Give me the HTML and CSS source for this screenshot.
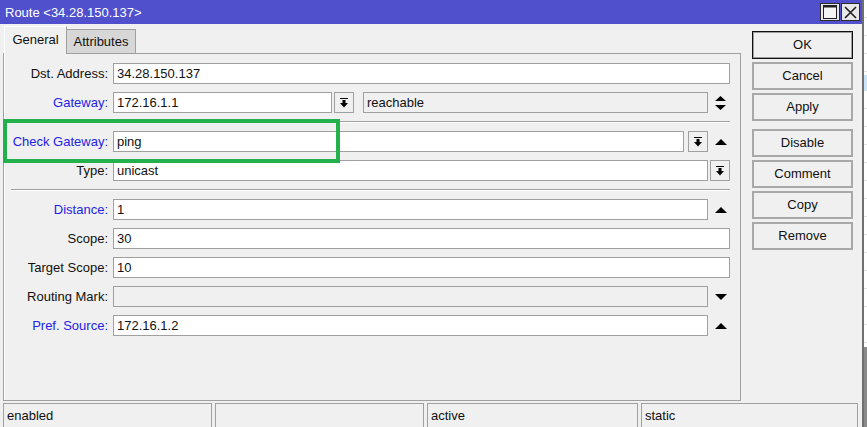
FILE: index.html
```html
<!DOCTYPE html>
<html>
<head>
<meta charset="utf-8">
<link rel="stylesheet" href="styles.css">
</head>
<body>
<div class="desktop">
  <div class="window">
    <div class="titlebar">
      <span class="title">Route &lt;34.28.150.137&gt;</span>
      <div class="tb-btns">
        <span class="tb-btn tb-max"><svg width="14" height="14" viewBox="0 0 14 14"><rect x="0.5" y="0.5" width="13" height="13" fill="#f4f4f4" stroke="#1e1e1e" stroke-width="1"/><rect x="1" y="1" width="12" height="1.5" fill="#1e1e1e"/></svg></span>
        <span class="tb-btn tb-close"><svg width="13" height="13" viewBox="0 0 13 13"><path d="M1 1 L12 12 M12 1 L1 12" stroke="#1e1e1e" stroke-width="1.6" fill="none"/></svg></span>
      </div>
    </div>
    <div class="main">
      <div class="left">
        <div class="tabs">
          <div class="tab tab-active">General</div>
          <div class="tab tab-inactive">Attributes</div>
        </div>
        <div class="panel">
          <div class="row">
            <div class="label">Dst. Address:</div>
            <div class="field span2"><div class="input">34.28.150.137</div></div>
          </div>
          <div class="row">
            <div class="label blue">Gateway:</div>
            <div class="field">
              <div class="input w-gw">172.16.1.1</div>
              <div class="ddbtn ml2"><svg width="8" height="10" viewBox="0 0 8 10"><rect x="0" y="0" width="8" height="1"/><rect x="2.5" y="2" width="3" height="3"/><path d="M0 5 L8 5 L4 9.5 Z"/></svg></div>
              <div class="input ro grow ml9">reachable</div>
            </div>
            <div class="slot"><svg width="11" height="14" viewBox="0 0 11 14"><path d="M0 5 L5.5 0 L11 5 Z M0 9 L11 9 L5.5 14 Z"/></svg></div>
          </div>
          <div class="sep"></div>
          <div class="row">
            <div class="label blue">Check Gateway:</div>
            <div class="field">
              <div class="input grow">ping</div>
              <div class="ddbtn ml4"><svg width="8" height="10" viewBox="0 0 8 10"><rect x="0" y="0" width="8" height="1"/><rect x="2.5" y="2" width="3" height="3"/><path d="M0 5 L8 5 L4 9.5 Z"/></svg></div>
            </div>
            <div class="slot"><svg width="12" height="6" viewBox="0 0 12 6"><path d="M0 6 L6 0 L12 6 Z"/></svg></div>
          </div>
          <div class="row">
            <div class="label">Type:</div>
            <div class="field"><div class="input grow">unicast</div></div>
            <div class="slot slot-btn"><div class="ddbtn"><svg width="8" height="10" viewBox="0 0 8 10"><rect x="0" y="0" width="8" height="1"/><rect x="2.5" y="2" width="3" height="3"/><path d="M0 5 L8 5 L4 9.5 Z"/></svg></div></div>
          </div>
          <div class="sep"></div>
          <div class="row">
            <div class="label blue">Distance:</div>
            <div class="field"><div class="input grow">1</div></div>
            <div class="slot"><svg width="12" height="6" viewBox="0 0 12 6"><path d="M0 6 L6 0 L12 6 Z"/></svg></div>
          </div>
          <div class="row">
            <div class="label">Scope:</div>
            <div class="field span2"><div class="input grow">30</div></div>
          </div>
          <div class="row">
            <div class="label">Target Scope:</div>
            <div class="field span2"><div class="input grow">10</div></div>
          </div>
          <div class="row">
            <div class="label">Routing Mark:</div>
            <div class="field"><div class="input ro grow"></div></div>
            <div class="slot"><svg width="12" height="6" viewBox="0 0 12 6"><path d="M0 0 L12 0 L6 6 Z"/></svg></div>
          </div>
          <div class="row">
            <div class="label blue">Pref. Source:</div>
            <div class="field"><div class="input grow">172.16.1.2</div></div>
            <div class="slot"><svg width="12" height="6" viewBox="0 0 12 6"><path d="M0 6 L6 0 L12 6 Z"/></svg></div>
          </div>
        </div>
      </div>
      <div class="buttons">
        <div class="btn btn-default">OK</div>
        <div class="btn">Cancel</div>
        <div class="btn btn-gap">Apply</div>
        <div class="btn">Disable</div>
        <div class="btn">Comment</div>
        <div class="btn">Copy</div>
        <div class="btn">Remove</div>
      </div>
    </div>
    <div class="statusbar">
      <div class="cell c1">enabled</div>
      <div class="cell c2"></div>
      <div class="cell c3">active</div>
      <div class="cell c4">static</div>
    </div>
    <div class="highlight"></div>
  </div>
  <div class="bgwin">
    <div class="bg-white bg-top"></div>
    <div class="bg-sel"></div>
    <div class="bg-white bg-rest"></div>
    <div class="bg-dark"></div>
  </div>
</div>
</body>
</html>
```

FILE: styles.css
```css
* { box-sizing: border-box; }
html, body { margin: 0; padding: 0; }
body {
  width: 867px;
  height: 427px;
  overflow: hidden;
  font-family: "Liberation Sans", Arial, sans-serif;
  font-size: 13px;
  color: #111;
  background: #f0f0f0;
}
.desktop { display: flex; height: 427px; }
.window {
  position: relative;
  width: 862px;
  height: 427px;
  background: #f0f0f0;
  display: flex;
  flex-direction: column;
  overflow: hidden;
}
.titlebar {
  height: 24px;
  background: #5050cd;
  display: flex;
  justify-content: space-between;
  align-items: center;
  padding: 0 2px 0 5px;
  flex: none;
}
.title { color: #fff; font-size: 13px; white-space: nowrap; }
.tb-btns { display: flex; gap: 1px; align-self: flex-start; margin-top: 3px; }
.tb-btn {
  height: 18px;
  border: 1px solid #2a2a2a;
  background: #e8e8e8;
  display: flex;
  align-items: center;
  justify-content: center;
}
.tb-max { width: 20px; }
.tb-close { width: 19px; }
.tb-btn svg { display: block; }

.main { display: flex; height: 377px; flex: none; }
.left { margin-left: 3px; margin-top: 2px; width: 738px; display: flex; flex-direction: column; }
.tabs { display: flex; align-items: flex-end; height: 27px; margin-left: 1px; }
.tab { text-align: center; white-space: nowrap; }
.tab-active {
  position: relative;
  z-index: 1;
  width: 63px;
  height: 28px;
  margin-bottom: -1px;
  background: #f0f0f0;
  border-top: 1px solid #fff;
  border-left: 1px solid #fff;
  border-right: 1px solid #a0a0a0;
  line-height: 26px;
}
.tab-inactive {
  width: 69px;
  height: 24px;
  background: #d7d7d7;
  border: 1px solid #a0a0a0;
  border-bottom: none;
  border-left: none;
  line-height: 24px;
}
.panel {
  height: 348px;
  border: 1px solid #a0a0a0;
  box-shadow: inset 1px 0 0 #fff;
  padding: 9px 10px 0 0;
}
.row {
  display: grid;
  grid-template-columns: 109px 595px 22px;
  height: 21px;
  margin-bottom: 8px;
  align-items: center;
}
.label { text-align: right; padding-right: 5px; white-space: nowrap; color: #111; }
.blue { color: #2323e6; }
.field { display: flex; height: 21px; }
.span2 { grid-column: 2 / 4; }
.input {
  height: 21px;
  border: 1px solid #a0a0a0;
  background: #fff;
  padding-left: 3px;
  line-height: 19px;
  white-space: nowrap;
  overflow: hidden;
  width: 100%;
}
.grow { flex: 1; width: auto; }
.ro { background: #f0f0f0; }
.w-gw { width: 219px; flex: none; }
.ml2 { margin-left: 2px; }
.ml4 { margin-left: 4px; }
.ml9 { margin-left: 9px; }
.ddbtn {
  width: 20px;
  height: 21px;
  flex: none;
  border: 1px solid #a0a0a0;
  background: #f0f0f0;
  display: flex;
  align-items: center;
  justify-content: center;
}
.ddbtn svg { display: block; fill: #000; }
.slot { display: flex; align-items: center; justify-content: center; padding-left: 3px; height: 21px; }
.slot svg { display: block; fill: #000; }
.slot-btn { justify-content: flex-start; padding-left: 2px; }
.sep {
  height: 2px;
  margin: 1px 0 8px 7px;
  border-top: 1px solid #a0a0a0;
  border-bottom: 1px solid #fff;
}

.buttons {
  margin-left: 11px;
  margin-top: 7px;
  width: 101px;
  display: flex;
  flex-direction: column;
  gap: 3px;
}
.btn {
  height: 28px;
  border: 2px solid #a8a8a8;
  background: #f0f0f0;
  text-align: center;
  line-height: 24px;
  white-space: nowrap;
}
.btn-default { border: 1px solid #111; box-shadow: inset 0 0 0 1px #9c9c9c; line-height: 26px; }
.btn-gap { margin-bottom: 5px; }

.statusbar {
  margin-top: 2px;
  height: 24px;
  display: flex;
  gap: 3px;
  padding-left: 3px;
  flex: none;
}
.cell {
  height: 26px;
  border: 1px solid #a0a0a0;
  padding: 2px 0 0 3px;
  line-height: 20px;
  white-space: nowrap;
}
.c1 { width: 209px; }
.c2 { width: 209px; }
.c3 { width: 211px; }
.c4 { width: 217px; }

.highlight {
  position: absolute;
  left: 3px;
  top: 119px;
  width: 337px;
  height: 44px;
  border: 4px solid #22b14c;
}

.bgwin {
  width: 5px;
  height: 427px;
  border-left: 2px solid #707070;
  display: flex;
  flex-direction: column;
}
.bg-white {
  background: repeating-linear-gradient(to bottom, #fff 0, #fff 17px, #e0e0e0 17px, #e0e0e0 18px);
}
.bg-top { height: 75px; }
.bg-sel { height: 16px; background: #cce4f7; }
.bg-rest { height: 256px; }
.bg-dark { flex: 1; background: #8a8a8a; }
```
